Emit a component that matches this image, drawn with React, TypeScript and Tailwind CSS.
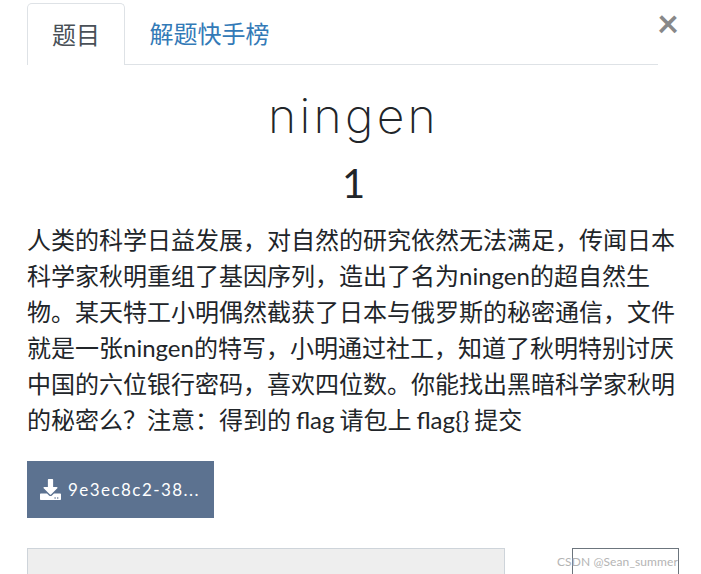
import { FaDownload } from "react-icons/fa";

export default function App() {
  return (
    <div className="relative h-[574px] w-[701px] overflow-hidden bg-white font-['Lato','Noto_Sans_CJK_SC',sans-serif] text-[#212529]">
      <div className="px-[27px] pt-[3px]">
        <div className="flex h-[62px] w-[631px] border-b border-[#dee2e6] text-[24px]">
          <div className="mb-[-1px] flex h-[62px] w-[98px] items-center justify-center rounded-t-[5px] border border-b-0 border-[#dee2e6] bg-white text-[#495057]">
            题目
          </div>
          <div className="flex items-center px-[24.5px] text-[#337ab7]">解题快手榜</div>
        </div>

        <h1 className="mt-[22px] pl-[6px] text-center font-['Inter',sans-serif] text-[48px] leading-[58px] font-[250] tracking-[3.3px]">
          ningen
        </h1>
        <h2 className="mt-[14px] pl-[6px] text-center text-[40px] leading-[48px] font-normal">1</h2>

        <p className="mt-[15px] w-[649px] text-[24px] leading-[36px] [word-spacing:-1.2px]">
          人类的科学日益发展，对自然的研究依然无法满足，传闻日本科学家秋明重组了基因序列，造出了名为ningen的超自然生物。某天特工小明偶然截获了日本与俄罗斯的秘密通信，文件就是一张ningen的特写，小明通过社工，知道了秋明特别讨厌中国的六位银行密码，喜欢四位数。你能找出黑暗科学家秋明的秘密么？注意：得到的 flag 请包上 flag{"{}"} 提交
        </p>

        <div className="mt-[23px] flex h-[57px] w-[187px] items-center gap-[7px] bg-[#5c7290] pl-[13px] text-white">
          <FaDownload size={21} />
          <span className="text-[17px] tracking-[1.45px]">9e3ec8c2-38...</span>
        </div>

        <div className="mt-[30px] flex w-[652px] items-start justify-between">
          <div className="h-[40px] w-[478px] border border-[#ced4da] bg-[#eeeeee]" />
          <div className="h-[40px] w-[107px] border border-[#6c757d]" />
        </div>
      </div>

      <button className="absolute top-[3px] left-[657px] text-[38px] leading-[38px] font-bold text-[#888888]">
        ×
      </button>
      <div className="absolute top-[553px] left-[557px] text-[12px] tracking-[0.1px] text-[#b4b4b4]">CSDN @Sean_summer</div>
    </div>
  );
}
